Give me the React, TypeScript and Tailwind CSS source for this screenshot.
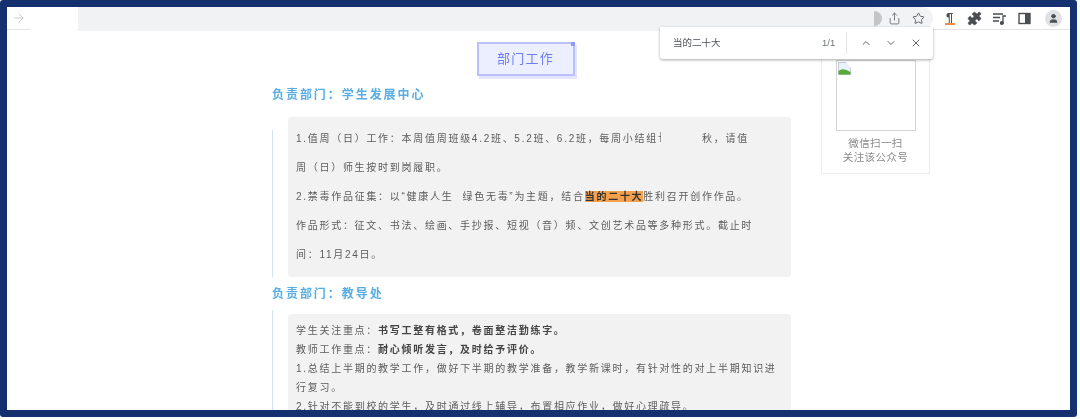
import { ArrowRight, ChevronDown, ChevronUp, Puzzle, Share, Star, User, X } from "lucide-react";

const font = { fontFamily: '"Liberation Sans", "Noto Sans CJK SC", sans-serif' };

function Toolbar() {
  return (
    <div className="flex h-[23px] shrink-0">
      <div className="flex w-[23px] items-center justify-center border-b border-[#e3e4e6] text-[#c4c6c8]">
        <ArrowRight size={14} strokeWidth={1.6} />
      </div>
      <div className="w-[48px]" />
      <div className="z-10 h-[24px] w-[796px] bg-[#f0f2f4]" />
      <div className="relative flex h-[22px] w-[59px] items-center gap-[9px] rounded-r-full bg-[#f1f3f4] pl-[14px] text-[#5f6368]">
        <div className="absolute left-[-6px] top-[4px] h-[15px] w-[14px] rounded-r-full bg-[#c4c5c7]" />
        <Share size={13} strokeWidth={1.5} />
        <Star size={13} strokeWidth={1.8} className="ml-[2px]" />
      </div>
      <div className="flex flex-1 items-center gap-[10px] border-b border-[#e3e4e6] pl-[9px] text-[#4a4d52]">
        <div className="flex h-[15px] w-[15px] flex-col items-center justify-center">
          <span className="text-[13px] font-bold leading-[11px]">¶</span>
          <span className="h-[2px] w-[10px] bg-[#f08a3c]" />
        </div>
        <Puzzle size={15} fill="#4a4d52" strokeWidth={1} />
        <svg width="15" height="13" viewBox="0 0 15 13" fill="none" stroke="#4a4d52" strokeWidth="1.3">
          <path d="M1 2h10M1 5.5h7M1 9h6" />
          <path d="M11 12V4h3" />
          <circle cx="9.8" cy="11" r="1.3" fill="#4a4d52" />
        </svg>
        <svg width="13" height="13" viewBox="0 0 13 13" className="ml-[1px]">
          <rect x="1" y="1.5" width="11" height="10" fill="none" stroke="#4a4d52" strokeWidth="1.4" />
          <rect x="7" y="1.5" width="5" height="10" fill="#4a4d52" />
        </svg>
        <div className="ml-[4px] flex h-[17px] w-[17px] items-center justify-center rounded-full bg-[#dfe1e5]">
          <User size={11} fill="#4a4d52" stroke="#4a4d52" />
        </div>
      </div>
    </div>
  );
}

function FindBar() {
  return (
    <div className="absolute left-[653px] top-[20px] z-20 flex h-[32px] w-[273px] items-center rounded-b-[3px] bg-white pl-[13px] text-[9.5px] text-[#4d5156] shadow-[0_1px_3px_rgba(0,0,0,0.35)]">
      <span className="w-[149px]">当的二十大</span>
      <span className="w-[24px] text-[#70757a]">1/1</span>
      <span className="h-[22px] w-px bg-[#e3e4e6]" />
      <span className="ml-[13px] flex items-center gap-[13px] text-[#5f6368]">
        <ChevronUp size={12} strokeWidth={2} />
        <ChevronDown size={12} strokeWidth={2} />
        <X size={12} strokeWidth={2} />
      </span>
    </div>
  );
}

function Heading({ children }: { children: string }) {
  return <h2 className="text-[12px] font-bold leading-[16px] tracking-[1.95px] text-[#58aee4]">{children}</h2>;
}

function QrCard() {
  return (
    <aside className="ml-[24px] mt-[-12px] flex h-[156px] w-[109px] shrink-0 flex-col items-center border border-[#ececec]">
      <div className="mt-[41px] h-[71px] w-[80px] border border-[#d4d4d4] p-px">
        <svg width="13" height="13" viewBox="0 0 13 13">
          <rect x="0.5" y="0.5" width="12" height="12" fill="#eaf1fb" stroke="#c5ccd6" />
          <path d="M0.5 12.5 L0.5 9 Q5 5 12.5 10 L12.5 12.5 Z" fill="#59a83c" />
          <path d="M8 0 L13 0 L13 6 Z" fill="#fff" />
        </svg>
      </div>
      <p className="mt-[5px] text-center text-[10.5px] leading-[14px] tracking-[0.4px] text-[#8b8b8b]">
        微信扫一扫
        <br />
        关注该公众号
      </p>
    </aside>
  );
}

export default function App() {
  return (
    <div className="h-[419px] w-[1080px] overflow-hidden bg-white" style={font}>
      <div className="h-[417px] w-[1077px] rounded-[3px] border-[7px] border-b-[7px] border-[#14306f]">
        <div className="relative flex h-[403px] flex-col overflow-hidden blur-[0.45px]">
          <Toolbar />
          <FindBar />
          <div className="flex pl-[265px]">
            <main className="w-[525px] shrink-0">
              <div className="flex justify-center pt-[12px]">
                <div className="relative mr-[18px] flex h-[34px] w-[98px] items-center justify-center border-2 border-[#b9c0fb] bg-[#ecefff] text-[13px] tracking-[1.3px] text-[#6f7df5] shadow-[2px_3px_0_#e3e5fb]">
                  部门工作
                  <span className="absolute right-[-3px] top-[-3px] h-0 w-0 border-b-[5px] border-l-[5px] border-b-transparent border-l-transparent border-r-[0px] border-t-[0px]" />
                  <span className="absolute right-[-2px] top-[-2px] h-[4px] w-[4px] bg-[#8f9af7]" />
                </div>
              </div>
              <div className="mt-[11px]">
                <Heading>负责部门：学生发展中心</Heading>
              </div>
              <div className="mt-[14px] flex">
                <div className="mt-[13px] w-[1px] shrink-0 bg-[#cfe4f6]" />
                <section className="ml-[15px] h-[160px] w-[503px] rounded-[3px] bg-[#f2f2f2] px-[8px] py-[7px] text-[10px] leading-[29px] tracking-[1.72px] text-[#5c5c5c]">
                  <p className="whitespace-nowrap">
                    1.值周（日）工作：本周值周班级4.2班、5.2班、6.2班，每周小结组
                    <span className="inline-block h-[12px] w-[3px] overflow-hidden align-[-2px] leading-[12px]">长</span>
                    <span className="inline-block w-[41px]" />
                    秋，请值
                  </p>
                  <p>周（日）师生按时到岗履职。</p>
                  <p className="whitespace-nowrap">
                    2.禁毒作品征集：以“健康人生&nbsp;&nbsp;绿色无毒”为主题，结合
                    <mark className="bg-[#f5a04c] font-bold text-[#333]">当的二十大</mark>
                    胜利召开创作作品。
                  </p>
                  <p className="whitespace-nowrap">作品形式：征文、书法、绘画、手抄报、短视（音）频、文创艺术品等多种形式。截止时</p>
                  <p>间：11月24日。</p>
                </section>
              </div>
              <div className="mt-[9px]">
                <Heading>负责部门：教导处</Heading>
              </div>
              <div className="mt-[8px] flex">
                <div className="w-[1px] shrink-0 bg-[#cfe4f6]" />
                <section className="ml-[15px] mt-[4px] w-[503px] rounded-[3px] bg-[#f2f2f2] px-[8px] py-[7px] text-[10px] leading-[19px] tracking-[1.72px] text-[#5c5c5c]">
                  <p>
                    学生关注重点：<b className="text-[#444]">书写工整有格式，卷面整洁勤练字。</b>
                  </p>
                  <p>
                    教师工作重点：<b className="text-[#444]">耐心倾听发言，及时给予评价。</b>
                  </p>
                  <p>1.总结上半期的教学工作，做好下半期的教学准备，教学新课时，有针对性的对上半期知识进行复习。</p>
                  <p>2.针对不能到校的学生，及时通过线上辅导，布置相应作业，做好心理疏导。</p>
                </section>
              </div>
            </main>
            <QrCard />
          </div>
        </div>
      </div>
    </div>
  );
}
